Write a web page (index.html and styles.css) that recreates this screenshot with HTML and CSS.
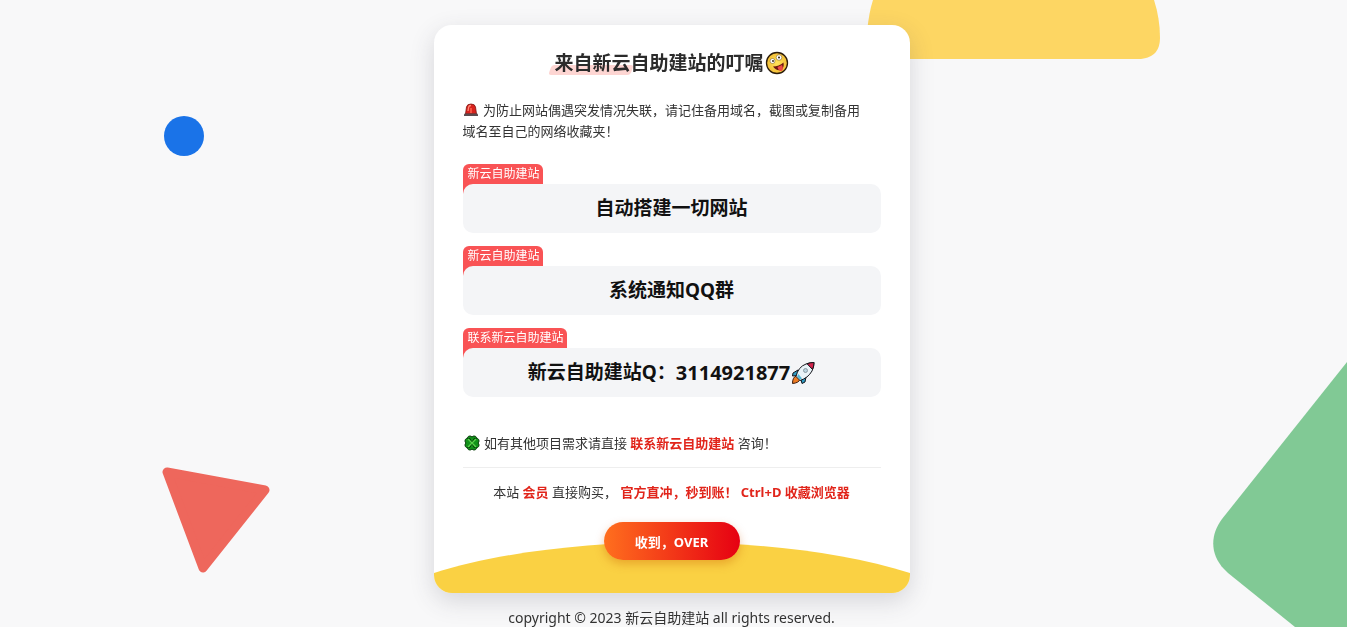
FILE: index.html
```html
<!DOCTYPE html>
<html lang="zh-CN">
<head>
  <meta charset="UTF-8">
  <meta name="viewport" content="width=device-width, initial-scale=1">
  <title>新云自助建站</title>
  <link rel="stylesheet" href="styles.css">
</head>
<body>
  <!-- 背景图形 -->
  <div class="shapes" aria-hidden="true">
    <span class="shape circle"></span>
    <svg class="shape yellow" viewBox="0 0 293 59"><path d="M6 0Q2 12 0 32V59H274Q293 57 293 38C293 25 291 12 287 0Z"/></svg>
    <svg class="shape triangle" viewBox="0 0 108 106"><path d="M5 5L103 23L41 101Z"/></svg>
    <svg class="shape green" viewBox="0 0 134 265"><path d="M134 0L9 157C-3 173-3 192 11 207L15 211L82 265H134Z"/></svg>
  </div>

  <main class="card">
    <svg class="wave" viewBox="0 0 476 51" preserveAspectRatio="none" aria-hidden="true"><path d="M0 31C130 -10 346 -10 476 31V51H0Z"/></svg>

    <h1 class="title">
      <span class="mark">来自新云</span>自助建站的叮嘱<svg class="emoji-lg" viewBox="0 0 24 24" aria-hidden="true">
        <defs><radialGradient id="face"><stop offset="0" stop-color="#ffe45c"/><stop offset="1" stop-color="#f3bd35"/></radialGradient></defs>
        <circle cx="12" cy="12" r="10.5" fill="url(#face)" stroke="#2b1b0a" stroke-width="1.3"/>
        <circle cx="7.5" cy="10" r="2.5" fill="#fff" stroke="#6b4a14" stroke-width=".5"/>
        <circle cx="8" cy="10" r=".9" fill="#2b1b0a"/>
        <circle cx="14" cy="6.5" r="2.8" fill="#fff" stroke="#6b4a14" stroke-width=".5"/>
        <circle cx="14" cy="6.5" r="1" fill="#2b1b0a"/>
        <path d="M8 15.5Q14 15.5 18.5 11.5Q19.5 17 16 19Q11 20 8 15.5Z" fill="#6e1710"/>
        <path d="M12.5 16L17 14Q19 18.5 16.5 20Q13.5 20.5 12.5 16Z" fill="#ee4a45"/>
      </svg>
    </h1>

    <p class="notice">
      <svg class="emoji" viewBox="0 0 16 16" aria-hidden="true">
        <path d="M2.5 12L3.5 5Q4 2 8 2T12.5 5L13.5 12Z" fill="#d9231d" stroke="#7c1512" stroke-width=".8"/>
        <path d="M5 9L5.7 5Q6 3.5 8 3.5" fill="none" stroke="#ff8a78" stroke-width="1.3"/>
        <path d="M8 6V11" stroke="#ff6550" stroke-width="1.5"/>
        <path d="M1 14V12.5Q1 11.5 2.5 11.5H13.5Q15 11.5 15 12.5V14Z" fill="#5a4a4e"/>
      </svg>
      为防止网站偶遇突发情况失联，请记住备用域名，截图或复制备用<br>域名至自己的网络收藏夹！
    </p>

    <div class="list">
      <section class="item">
        <span class="tag">新云自助建站</span>
        <a class="box" href="#">自动搭建一切网站</a>
      </section>
      <section class="item">
        <span class="tag">新云自助建站</span>
        <a class="box" href="#">系统通知QQ群</a>
      </section>
      <section class="item">
        <span class="tag">联系新云自助建站</span>
        <a class="box" href="#">新云自助建站Q：<span class="num">3114921877</span><svg class="emoji-lg" viewBox="0 0 24 24" aria-hidden="true">
          <path d="M7 9L2 12L1.5 15L7 14.5Z" fill="#2e9cc4" stroke="#15161c" stroke-linejoin="round"/>
          <path d="M15 16L14 21L11 22.5L9.5 17Z" fill="#2e9cc4" stroke="#15161c" stroke-linejoin="round"/>
          <path d="M5 15Q1.5 16.5 1.5 22.5Q7.5 22 9 18.5Z" fill="#ee7b22" stroke="#3b1d10"/>
          <path d="M5 15.5Q7 6 15 3Q19 1.5 23 1.5Q23 6 21 10Q17 17 9 19.5Z" fill="#e9f3f8" stroke="#15161c" stroke-linejoin="round"/>
          <path d="M16 2.7Q19.5 1.5 23 1.5Q23 5 21.5 8.5Z" fill="#d3234c" stroke="#15161c" stroke-linejoin="round"/>
          <circle cx="14.5" cy="9.5" r="2" fill="#b9d3de" stroke="#7d8a94" stroke-width=".8"/>
          <path d="M6 15.5L9 18.5L11 17.5L7.5 13Z" fill="#55b9d6"/>
        </svg></a>
      </section>
    </div>

    <p class="contact">
      <svg class="emoji" viewBox="0 0 16 16" aria-hidden="true">
        <g fill="#12931a" stroke="#07400b" stroke-width="1">
          <path d="M8 8L3.5 6Q2.5 1 6 1Q7 1 8 2Q9 1 10 1Q13.5 1 12.5 6Z"/>
          <path d="M8 8L3.5 10Q2.5 15 6 15Q7 15 8 14Q9 15 10 15Q13.5 15 12.5 10Z"/>
          <path d="M8 8L6 3.5Q1 2.5 1 6Q1 7 2 8Q1 9 1 10Q1 13.5 6 12.5Z"/>
          <path d="M8 8L10 3.5Q15 2.5 15 6Q15 7 14 8Q15 9 15 10Q15 13.5 10 12.5Z"/>
        </g>
        <path d="M4 4L12 12M12 4L4 12" stroke="#5bd34c" stroke-width="1.2"/>
      </svg>
      如有其他项目需求请直接 <a class="red" href="#">联系新云自助建站</a> 咨询！
    </p>

    <hr class="line">

    <p class="vip">本站 <a class="red" href="#">会员</a> 直接购买， <b class="red">官方直冲，秒到账！ Ctrl+D 收藏浏览器</b></p>

    <button class="btn" type="button">收到，OVER</button>
  </main>

  <footer class="copyright">copyright © 2023 新云自助建站 all rights reserved.</footer>
</body>
</html>
```
FILE: styles.css
```css
* { box-sizing: border-box; }
body {
  margin: 0;
  padding: 25px 20px 0 16px;
  background: #f8f8f9;
  color: #333;
  font-family: "Noto Sans", "Noto Sans CJK SC", sans-serif;
  font-size: 13px;
  line-height: 21px;
}
h1, p { margin: 0; }
a { color: inherit; text-decoration: none; }

/* 背景图形 */
.shapes {
  position: fixed;
  inset: 0;
  overflow: hidden;
  z-index: -1;
}
.shape { position: absolute; }
.circle {
  left: 164px; top: 116px;
  width: 40px; height: 40px;
  border-radius: 50%;
  background: #1a73e8;
}
.yellow { right: 187px; top: 0; width: 293px; height: 59px; fill: #fdd663; }
.triangle {
  left: 162px; bottom: 54px;
  width: 108px; height: 106px;
  fill: #ee675c; stroke: #ee675c;
  stroke-width: 9; stroke-linejoin: round;
}
.green { right: 0; bottom: 0; width: 134px; height: 265px; fill: #81c995; }

/* 卡片 */
.card {
  position: relative;
  display: flex;
  flex-direction: column;
  max-width: 476px;
  margin: 0 auto;
  padding: 25px 29px 33px;
  background: #fff;
  border-radius: 18px;
  box-shadow: 0 8px 24px rgba(60,60,80,0.18);
}
.wave {
  position: absolute;
  left: 0; bottom: 0;
  width: 100%; height: 51px;
  border-radius: 0 0 18px 18px;
  fill: #fad143;
}

.title {
  display: flex;
  justify-content: center;
  align-items: center;
  margin-bottom: 24px;
  color: #2b2b2b;
  font-size: 19px;
  line-height: 26px;
}
.mark { position: relative; z-index: 0; }
.mark::before {
  content: "";
  position: absolute;
  left: -4px; right: -2px; bottom: 1px;
  height: 10px;
  background: #fdd5d2;
  border-radius: 3px;
  transform: skewX(-20deg);
  z-index: -1;
}
.emoji-lg { width: 24px; height: 24px; margin-left: 1px; flex: none; }
.emoji { width: 16px; height: 16px; margin: 0 1px; vertical-align: -3px; }
.notice .emoji { margin-left: 0; }

.list {
  display: flex;
  flex-direction: column;
  gap: 13px;
  margin: 22px 0 36px;
}
.item { display: flex; flex-direction: column; align-items: flex-start; }
.tag {
  position: relative;
  padding: 0 3px 0 5px;
  background: #f95355;
  color: #fff;
  font-size: 12px;
  line-height: 20px;
  border-radius: 6px 6px 0 0;
}
.tag::after {
  content: "";
  position: absolute;
  left: 0; top: 100%;
  width: 10px; height: 10px;
  background: #f95355;
}
.box {
  position: relative;
  display: flex;
  justify-content: center;
  align-items: center;
  width: 100%;
  min-height: 49px;
  background: #f4f5f7;
  border-radius: 10px;
  color: #111;
  font-size: 19px;
  font-weight: bold;
}
.num { font-size: 20px; }

.red { color: #e1251b; font-weight: bold; }
.line {
  width: 100%;
  margin: 13px 0 14px;
  border: 0;
  border-top: 1px solid #eee;
}
.vip { text-align: center; }

.btn {
  position: relative;
  align-self: center;
  margin-top: 19px;
  width: 136px;
  height: 38px;
  border: 0;
  border-radius: 19px;
  background: linear-gradient(90deg, #ff6f1e, #e60012);
  box-shadow: 0 4px 10px rgba(200,90,0,0.35);
  color: #fff;
  font: bold 13px "Noto Sans", "Noto Sans CJK SC", sans-serif;
  cursor: pointer;
}

.copyright { margin-top: 14px; font-size: 14px; text-align: center; }
```
